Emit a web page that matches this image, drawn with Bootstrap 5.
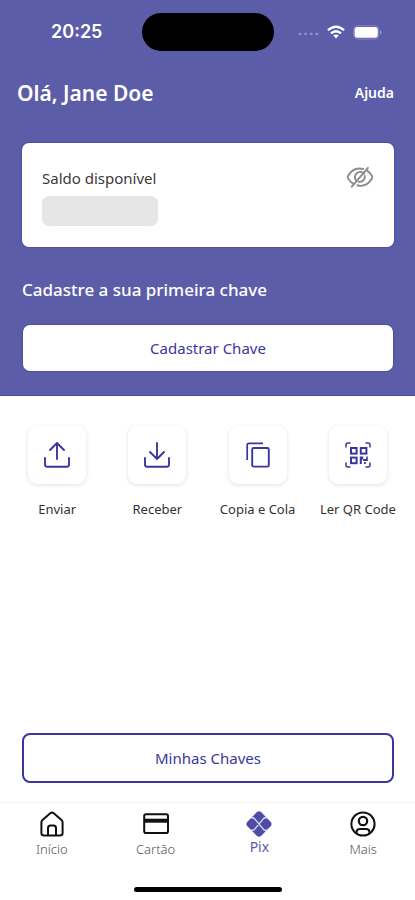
<!DOCTYPE html>
<html lang="pt-BR">
<head>
<meta charset="utf-8">
<meta name="viewport" content="width=device-width, initial-scale=1">
<title>Pix</title>
<link href="https://cdn.jsdelivr.net/npm/bootstrap@5.3.0/dist/css/bootstrap.min.css" rel="stylesheet">
<style>
  :root { --brand: #5c5da8; --ink: #3b369c; }
  body { font-family: "Noto Sans", "Open Sans", sans-serif; background: #fff; color: #333; }
  svg { display: block; flex: none; }
  .hero { background: var(--brand); padding-bottom: 24px; border-bottom: 1px solid #48469b; }
  .status { height: 64px; }
  .clock { font: 600 18px/24px Inter, sans-serif; }
  .island { width: 132px; height: 38px; background: #000; }
  .topline { height: 58px; padding: 0 21px 0 17px; }
  .hello { font-size: 21px; line-height: 28px; font-weight: 600; }
  .help { font-size: 14px; line-height: 20px; font-weight: 600; }
  .gutter { padding-left: 22px; padding-right: 21px; }
  .balance { margin-top: 21px; height: 104px; padding: 24px 20px 20px; border-radius: 7px; box-shadow: 0 0 2px #35308c; }
  .balance-label { font-size: 15px; line-height: 22px; color: #3a3a3a; }
  .placeholder-bar { width: 116px; height: 30px; margin-top: 7px; border-radius: 7px; background: #e6e6e6; }
  .subhead { font-size: 17px; line-height: 24px; font-weight: 500; margin: 31px 0 23px; }
  .wide { font-size: 15px; line-height: 22px; color: var(--ink); border-radius: 7px; }
  .wide:hover { color: var(--ink); }
  .solid { background: #fff; height: 46px; width: calc(100% - 2px); margin: 0 1px; box-shadow: 0 0 2px #35308c; }
  .outlined { height: 50px; border: 2px solid var(--ink); border-radius: 8px; }
  .actions { padding: 30px 7px 0; }
  .action { color: #333; font-size: 13px; line-height: 18px; }
  .tile { width: 58px; height: 58px; border-radius: 9px; margin-bottom: 16px; color: var(--ink); box-shadow: 0 1px 4px rgba(0,0,0,.12); }
  .tabs { margin-top: 19px; height: 85px; border-top: 1px solid #f3f3f3; padding-top: 7px; }
  .tab { font-size: 13px; line-height: 18px; color: #555; font-weight: 300; }
  .tab svg { color: #111; margin-bottom: 2px; }
  .tab.current { font-size: 14px; color: var(--brand); font-weight: 400; }
  .tab.current svg { color: #4f4ca5; margin-bottom: 0; }
  .home-bar { width: 148px; height: 5px; background: #000; margin-bottom: 8px; }
</style>
<script src="https://cdn.jsdelivr.net/npm/bootstrap@5.3.0/dist/js/bootstrap.bundle.min.js"></script>
</head>
<body>
<div class="d-flex flex-column min-vh-100">
  <header class="hero text-white">
    <div class="status row g-0 align-items-center">
      <div class="col clock text-center ps-2"><span class="ps-1">20:25</span></div>
      <div class="col-auto island rounded-pill"></div>
      <div class="col d-flex align-items-center justify-content-center gap-2 pe-2">
        <svg width="21" height="5" viewBox="0 0 21 5" fill="#8f8fca" aria-hidden="true"><circle cx="2" cy="4" r="1.5"/><circle cx="7.6" cy="4" r="1.5"/><circle cx="13.2" cy="4" r="1.5"/><circle cx="18.8" cy="4" r="1.5"/></svg>
        <svg width="18" height="14" viewBox="0 0 18 14" aria-label="Wi-Fi" role="img"><g fill="none" stroke="#fff" stroke-width="2.4"><path d="M1 5.2Q9-1.8 17 5.2"/><path d="M4 8.4Q9 4 14 8.4"/></g><path d="M6.2 10.5Q9 8.4 11.8 10.5L9 13.5Z" fill="#fff"/></svg>
        <svg width="29" height="15" viewBox="0 0 29 15" aria-label="Bateria" role="img"><rect x=".7" y=".7" width="25" height="13.4" rx="4" fill="none" stroke="#8585c3"/><rect x="1.600" y="2" width="23.200" height="10.800" rx="2.8" fill="#fff"/><path d="M27 5v5q3-2.5 0-5Z" fill="#9a9ad0"/></svg>
      </div>
    </div>
    <div class="topline d-flex align-items-center justify-content-between">
      <h1 class="hello m-0">Olá, Jane Doe</h1>
      <a href="#" class="help text-white text-decoration-none">Ajuda</a>
    </div>
    <div class="gutter">
      <section class="balance bg-white d-flex justify-content-between align-items-start">
        <div>
          <div class="balance-label">Saldo disponível</div>
          <div class="placeholder-bar"></div>
        </div>
        <button type="button" class="btn border-0 p-0" aria-label="Mostrar saldo">
          <svg width="28" height="21" viewBox="0 0 28 22" fill="none" stroke="#8c8c8c" stroke-width="2" stroke-linecap="round"><path d="M17.2 2.1C10 .1 4.5 4 1.4 9.4Q.9 10.6 1.4 11.6Q3.2 15.1 6.5 17.1"/><path d="M21.7 4.1Q25 6.2 26.7 9.6Q27.1 10.7 26.6 11.7C22.6 19 16.1 20.9 11.2 19.1"/><path d="M18.3 7A5.3 5.3 0 1 0 10 14.2M12.5 15.4A5.3 5.3 0 0 0 19 9.4"/><path d="M22.3 1L5.4 20.6"/></svg>
        </button>
      </section>
      <h2 class="subhead">Cadastre a sua primeira chave</h2>
      <button type="button" class="btn wide solid border-0 p-0">Cadastrar Chave</button>
    </div>
  </header>

  <main class="flex-grow-1 d-flex flex-column">
    <div class="actions row g-0">
      <a href="#" class="action col d-flex flex-column align-items-center text-decoration-none text-nowrap">
        <span class="tile bg-white d-flex align-items-center justify-content-center">
          <svg width="28" height="28" viewBox="0 0 28 28" fill="none" stroke="currentColor" stroke-width="1.9" stroke-linecap="round" stroke-linejoin="round"><path d="M14 18V2M7 9l7-7 7 7"/><path d="M2 17v6.5q0 2.2 2.2 2.2h19.6q2.2 0 2.2-2.2V17"/></svg>
        </span>Enviar</a>
      <a href="#" class="action col d-flex flex-column align-items-center text-decoration-none text-nowrap">
        <span class="tile bg-white d-flex align-items-center justify-content-center">
          <svg width="28" height="28" viewBox="0 0 28 28" fill="none" stroke="currentColor" stroke-width="1.9" stroke-linecap="round" stroke-linejoin="round"><path d="M14 2v16M7 11l7 7 7-7"/><path d="M2 17v6.5q0 2.2 2.2 2.2h19.6q2.2 0 2.2-2.2V17"/></svg>
        </span>Receber</a>
      <a href="#" class="action col d-flex flex-column align-items-center text-decoration-none text-nowrap">
        <span class="tile bg-white d-flex align-items-center justify-content-center">
          <svg width="28" height="28" viewBox="0 0 28 28" fill="none" stroke="currentColor" stroke-width="1.9" stroke-linejoin="round"><rect x="8.2" y="7" width="16.6" height="18.6" rx="1.4"/><path d="M19 2.4H5q-1.8 0-1.8 1.8V19" stroke-width="1.7"/></svg>
        </span>Copia e Cola</a>
      <a href="#" class="action col d-flex flex-column align-items-center text-decoration-none text-nowrap">
        <span class="tile bg-white d-flex align-items-center justify-content-center">
          <svg width="28" height="28" viewBox="0 0 28 28" fill="none" stroke="currentColor"><path d="M2 6.500V4q0-2 2-2h2.500M21.500 2H24q2 0 2 2v2.500M26 21.500V24q0 2-2 2h-2.500M6.500 26H4q-2 0-2-2v-2.500" stroke-width="1.500"/><g stroke-width="2"><rect x="7" y="7" width="5.600" height="5.600"/><rect x="16.800" y="7" width="5.600" height="5.600"/><rect x="7" y="16.600" width="5.600" height="5.600"/></g><path d="M15.800 15.600h3.400v3h-1.400V23h-2ZM19.200 18h3v-2.400h1.600v4.400h-4.600Z" fill="currentColor" stroke="none"/><path d="M20 21h1.800v2H20Z" fill="currentColor" stroke="none"/></svg>
        </span>Ler QR Code</a>
    </div>
    <div class="gutter mt-auto">
      <button type="button" class="btn wide outlined w-100 p-0">Minhas Chaves</button>
    </div>
  </main>

  <nav class="tabs row g-0" aria-label="Principal">
    <a href="#" class="tab col d-flex flex-column align-items-center text-decoration-none">
      <svg width="28" height="28" viewBox="0 0 28 28" fill="none" stroke="currentColor" stroke-width="2" stroke-linejoin="round"><path d="M3.400 12.500q0-1.500 1.100-2.500l8-6.900q1.500-1.200 3 0l8 6.900q1.100 1 1.100 2.500V23q0 2.600-2.600 2.600H6Q3.400 25.600 3.400 23Z"/><path d="M10 25.500V18q0-2.500 2.500-2.500h3Q18 15.500 18 18v7.500"/></svg>Início</a>
    <a href="#" class="tab col d-flex flex-column align-items-center text-decoration-none">
      <svg width="28" height="28" viewBox="0 0 28 28" fill="none" stroke="currentColor" stroke-width="2"><rect x="2.200" y="4.200" width="23.800" height="18.800" rx="1.800"/><path d="M2.200 10.700H26" stroke-width="4"/></svg>Cartão</a>
    <a href="#" class="tab current col d-flex flex-column align-items-center text-decoration-none" aria-current="page">
      <svg width="28" height="28" viewBox="0 0 28 28" fill="currentColor"><path d="M11.700 2.300q2.300-2 4.600 0l9.300 9.400q2 2.300 0 4.600l-9.300 9.400q-2.300 2-4.600 0L2.400 16.300q-2-2.300 0-4.600Z"/><path d="M5.500 7.800h2q1.200 0 2 .8L18.500 19.400q.8.800 2 .8h2M22.500 7.800h-2q-1.200 0-2 .8L9.500 19.400q-.8.800-2 .8h-2" fill="none" stroke="#dcdcf4" stroke-width="1.400"/></svg>Pix</a>
    <a href="#" class="tab col d-flex flex-column align-items-center text-decoration-none">
      <svg width="28" height="28" viewBox="0 0 28 28" fill="none" stroke="currentColor" stroke-width="2"><circle cx="14" cy="14" r="11.600"/><circle cx="14" cy="11" r="4.200" stroke-width="2.200"/><path d="M7.500 23.300v-1q0-3.300 3.500-3.300h6q3.500 0 3.500 3.300v1"/></svg>Mais</a>
  </nav>
  <div class="home-bar rounded-pill mx-auto"></div>
</div>
</body>
</html>
